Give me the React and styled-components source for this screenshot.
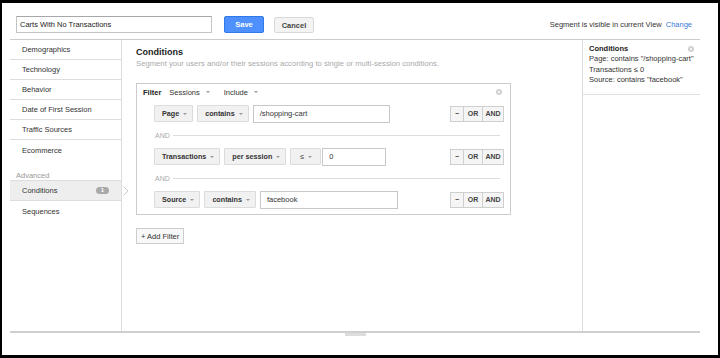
import React from 'react';
import styled, { createGlobalStyle } from 'styled-components';

const GlobalStyle = createGlobalStyle`
  html, body { margin: 0; padding: 0; background: #000; }
  body {
    font-family: "Liberation Sans", Arial, sans-serif;
    font-size: 7.5px;
    color: #333;
    overflow: hidden;
  }
  * { box-sizing: border-box; }
`;

const Frame = styled.div`
  width: 716px;
  height: 352px;
  margin: 3px 0 0 2px;
  background: #fff;
  overflow: hidden;
`;

const Page = styled.div`
  margin-left: 8px;
  width: 690px;
`;

const TopBar = styled.div`
  height: 37px;
  display: flex;
  align-items: flex-start;
  padding: 13px 8px 0 6px;
  border-bottom: 1px solid #ccc;
`;

const NameInput = styled.input`
  width: 196px;
  height: 17px;
  border: 1px solid #c4c4c4;
  border-top-color: #a8a8a8;
  padding: 0 3px;
  font: 7.5px "Liberation Sans", Arial, sans-serif;
  color: #222;
  outline: none;
`;

const Button = styled.button`
  width: 40px;
  height: ${p => (p.$primary ? '17px' : '16px')};
  margin: ${p => (p.$primary ? '0 0 0 12px' : '1px 0 0 10px')};
  padding: 0;
  border-radius: 2px;
  border: 1px solid ${p => (p.$primary ? '#3079ed' : '#d9d9d9')};
  background: ${p => (p.$primary ? '#4d90fe' : '#f3f3f3')};
  color: ${p => (p.$primary ? '#fff' : '#444')};
  font: bold 7.5px "Liberation Sans", Arial, sans-serif;
`;

const Visibility = styled.div`
  margin-left: auto;
  line-height: 17px;
  color: #333;
`;

const Link = styled.span`
  color: #3b78d6;
  margin-left: 4px;
`;

const Body = styled.div`
  display: flex;
  height: 293px;
  border-bottom: 2px solid #cfcfcf;
`;

const Nav = styled.div`
  width: 112px;
  flex: none;
  border-right: 1px solid #ddd;
`;

const NavItem = styled.div`
  position: relative;
  display: flex;
  align-items: center;
  height: ${p => (p.$active ? '21px' : '20px')};
  padding: 0 12px;
  border-bottom: ${p => (p.$divided || p.$active ? '1px solid #ddd' : 'none')};
  border-top: ${p => (p.$active ? '1px solid #ddd' : 'none')};
  background: ${p => (p.$active ? '#eee' : 'transparent')};
  color: #333;
`;

const NavLabel = styled.div`
  height: 20px;
  padding: 11px 0 0 6px;
  line-height: 9px;
  color: #999;
`;

const Badge = styled.span`
  margin-left: auto;
  width: 13px;
  height: 7px;
  border-radius: 4px;
  background: #a9a9a9;
  color: #fff;
  font-size: 6px;
  font-weight: bold;
  line-height: 7px;
  text-align: center;
`;

const Chevron = styled.svg`
  position: absolute;
  right: -8px;
  top: 5px;
`;

const Main = styled.div`
  flex: 1;
  padding: 6px 0 0 14px;
`;

const Heading = styled.div`
  font-size: 9px;
  font-weight: bold;
  line-height: 12px;
  color: #222;
`;

const Subtitle = styled.div`
  line-height: 11px;
  font-size: 7.7px;
  color: #aaa;
`;

const FilterBox = styled.div`
  width: 375px;
  margin-top: 14px;
  border: 1px solid #ccc;
  padding: 0 6px 6px 0;
`;

const FilterHead = styled.div`
  display: flex;
  align-items: center;
  height: 16px;
  padding: 0 2px 0 6px;
  margin-bottom: 5px;
`;

const FilterTitle = styled.span`
  font-weight: bold;
  color: #222;
  margin-right: 8px;
`;

const HeadMenu = styled.span`
  display: inline-flex;
  align-items: center;
  margin-right: 14px;
  color: #333;
`;

const CloseIcon = styled.svg`
  margin-left: auto;
  flex: none;
`;

const Rows = styled.div`
  padding-left: 17px;
`;

const Row = styled.div`
  display: flex;
  align-items: center;
  height: 17px;
  gap: 4px;
`;

const Dropdown = styled.div`
  display: flex;
  align-items: center;
  height: 17px;
  padding: ${p => (p.$plain ? '0 8px 0 9px' : '0 5px 0 7px')};
  background: #f1f1f1;
  border: 1px solid #dcdcdc;
  border-radius: 1px;
  font-size: 7.2px;
  font-weight: ${p => (p.$plain ? 'normal' : 'bold')};
  color: #333;
  white-space: nowrap;
`;

const Caret = styled.span`
  width: 0;
  height: 0;
  margin-left: ${p => p.$gap || 4}px;
  border-left: 2px solid transparent;
  border-right: 2px solid transparent;
  border-top: 2px solid #999;
`;

const ValueInput = styled.div`
  width: ${p => p.$w}px;
  height: 18px;
  margin-left: ${p => p.$shift || 0}px;
  border: 1px solid #c8c8c8;
  padding-left: 6px;
  line-height: 16px;
  color: #333;
`;

const Actions = styled.div`
  margin-left: auto;
  display: flex;
  height: 16px;
  border: 1px solid #cfcfcf;
  background: #f5f5f5;
`;

const ActionBtn = styled.span`
  width: ${p => p.$w}px;
  display: flex;
  align-items: center;
  justify-content: center;
  font-weight: bold;
  font-size: 7px;
  color: #444;
  & + & { border-left: 1px solid #cfcfcf; }
`;

const AndRule = styled.div`
  display: flex;
  align-items: center;
  height: 26px;
  margin: 0 4px 0 1px;
  color: #aaa;
  font-size: 7px;
  &::after {
    content: '';
    flex: 1;
    height: 1px;
    background: #ddd;
    margin-left: 3px;
  }
`;

const AddFilter = styled.div`
  display: inline-flex;
  align-items: center;
  height: 16px;
  margin-top: 13px;
  padding: 0 4px;
  border: 1px solid #ccc;
  background: #f8f8f8;
  color: #333;
`;

const Summary = styled.div`
  width: 118px;
  flex: none;
  border-left: 1px solid #ddd;
`;

const SummaryBlock = styled.div`
  padding: 4px 6px 8px 6px;
  border-bottom: 1px solid #e2e2e2;
`;

const SummaryHead = styled.div`
  display: flex;
  align-items: center;
  font-weight: bold;
  color: #222;
  line-height: 10px;
`;

const SummaryLine = styled.div`
  line-height: 10.5px;
  color: #333;
`;

const Handle = styled.div`
  width: 21px;
  height: 3px;
  margin: 0 auto;
  background: #ddd;
`;

const Close = () => (
  <CloseIcon width="6" height="6" viewBox="0 0 6 6">
    <circle cx="3" cy="3" r="3" fill="#cfcfcf" />
    <path d="M1.8 1.8 L4.2 4.2 M4.2 1.8 L1.8 4.2" stroke="#fff" strokeWidth="0.8" />
  </CloseIcon>
);

const RowActions = () => (
  <Actions>
    <ActionBtn $w={12}>−</ActionBtn>
    <ActionBtn $w={19}>OR</ActionBtn>
    <ActionBtn $w={21}>AND</ActionBtn>
  </Actions>
);

const navItems = [
  { label: 'Demographics', divided: true },
  { label: 'Technology', divided: true },
  { label: 'Behavior', divided: true },
  { label: 'Date of First Session', divided: true },
  { label: 'Traffic Sources', divided: true },
  { label: 'Ecommerce' },
];

export default function App() {
  return (
    <>
      <GlobalStyle />
      <Frame>
        <Page>
          <TopBar>
            <NameInput readOnly value="Carts With No Transactions" />
            <Button $primary>Save</Button>
            <Button>Cancel</Button>
            <Visibility>
              Segment is visible in current View<Link>Change</Link>
            </Visibility>
          </TopBar>

          <Body>
            <Nav>
              {navItems.map(item => (
                <NavItem key={item.label} $divided={item.divided}>{item.label}</NavItem>
              ))}
              <NavLabel>Advanced</NavLabel>
              <NavItem $active>
                Conditions
                <Badge>1</Badge>
                <Chevron width="6" height="10" viewBox="0 0 6 10">
                  <path d="M0.5 0.5 L5 5 L0.5 9.5" fill="#fff" stroke="#ccc" strokeWidth="1" />
                </Chevron>
              </NavItem>
              <NavItem>Sequences</NavItem>
            </Nav>

            <Main>
              <Heading>Conditions</Heading>
              <Subtitle>Segment your users and/or their sessions according to single or multi-session conditions.</Subtitle>

              <FilterBox>
                <FilterHead>
                  <FilterTitle>Filter</FilterTitle>
                  <HeadMenu>Sessions<Caret $gap={6} /></HeadMenu>
                  <HeadMenu>Include<Caret $gap={6} /></HeadMenu>
                  <Close />
                </FilterHead>
                <Rows>
                  <Row>
                    <Dropdown>Page<Caret /></Dropdown>
                    <Dropdown>contains<Caret /></Dropdown>
                    <ValueInput $w={137}>/shopping-cart</ValueInput>
                    <RowActions />
                  </Row>
                  <AndRule>AND</AndRule>
                  <Row>
                    <Dropdown>Transactions<Caret /></Dropdown>
                    <Dropdown>per session<Caret /></Dropdown>
                    <Dropdown $plain>≤<Caret /></Dropdown>
                    <ValueInput $w={64} $shift={-3}>0</ValueInput>
                    <RowActions />
                  </Row>
                  <AndRule>AND</AndRule>
                  <Row>
                    <Dropdown>Source<Caret /></Dropdown>
                    <Dropdown>contains<Caret /></Dropdown>
                    <ValueInput $w={138}>facebook</ValueInput>
                    <RowActions />
                  </Row>
                </Rows>
              </FilterBox>

              <AddFilter>+ Add Filter</AddFilter>
            </Main>

            <Summary>
              <SummaryBlock>
                <SummaryHead>Conditions<Close /></SummaryHead>
                <SummaryLine>Page: contains "/shopping-cart"</SummaryLine>
                <SummaryLine>Transactions ≤ 0</SummaryLine>
                <SummaryLine>Source: contains "facebook"</SummaryLine>
              </SummaryBlock>
            </Summary>
          </Body>
          <Handle />
        </Page>
      </Frame>
    </>
  );
}
